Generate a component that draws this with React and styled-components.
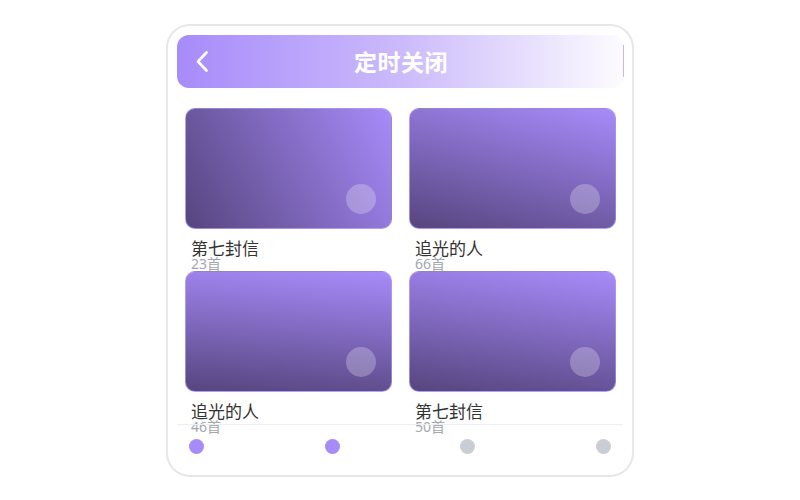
import React from 'react';
import styled, { createGlobalStyle } from 'styled-components';

const GlobalStyle = createGlobalStyle`
  html, body {
    margin: 0;
    padding: 0;
    background: #fff;
  }
  body {
    font-family: "Noto Sans", "Noto Sans CJK SC", sans-serif;
  }
`;

const Page = styled.div`
  display: flex;
  justify-content: center;
  align-items: center;
  height: 500px;
`;

const Phone = styled.div`
  box-sizing: border-box;
  width: 468px;
  height: 453px;
  border: 2px solid #e6e7ea;
  border-radius: 24px;
  padding: 9px;
  display: flex;
  flex-direction: column;
  background: #fff;
`;

const Header = styled.div`
  flex: none;
  height: 53px;
  margin-right: -2px;
  border-radius: 12px;
  background: linear-gradient(to right, #a78bfa 0%, #cbbafb 50%, #fdfcff 100%);
  display: grid;
  grid-template-columns: 1fr auto 1fr;
  align-items: center;
  padding: 0 10px;
  margin-bottom: 20px;
`;

const BackButton = styled.div`
  display: flex;
  align-items: center;
  justify-self: start;
  margin-left: 9px;
`;

const Title = styled.h1`
  margin: 0;
  color: #fff;
  font-size: 23px;
  font-weight: 700;
  letter-spacing: 0.5px;
`;

const EdgeLine = styled.span`
  justify-self: end;
  width: 1px;
  height: 32px;
  margin-right: -9px;
  background: #c4b5fd;
`;

const Grid = styled.div`
  flex: 1 1 0;
  min-height: 0;
  display: grid;
  grid-template-columns: 207px 207px;
  column-gap: 17px;
  align-content: start;
  padding-left: 8px;
`;

const Item = styled.div`
  display: flex;
  flex-direction: column;
`;

const Cover = styled.div`
  position: relative;
  box-sizing: border-box;
  height: 121px;
  border-radius: 10px;
  border: 1px solid rgba(196, 181, 253, 0.55);
  background: linear-gradient(${(p) => p.$angle}, #56457f 0%, #a78bfa 100%);
`;

const Play = styled.span`
  position: absolute;
  right: 15px;
  bottom: 14px;
  width: 30px;
  height: 30px;
  border-radius: 50%;
  background: rgba(255, 255, 255, 0.25);
`;

const Name = styled.div`
  margin: 12px 0 0 6px;
  font-size: 17px;
  line-height: 16px;
  color: #333;
`;

const Count = styled.div`
  margin-left: 6px;
  font-size: 14px;
  line-height: 14px;
  color: #a3a6ad;
`;

const Nav = styled.div`
  flex: none;
  border-top: 1px solid #eceef2;
  padding: 14px 12px 12px;
  display: flex;
  justify-content: space-between;
`;

const Dot = styled.span`
  width: 15px;
  height: 15px;
  border-radius: 50%;
  background: ${(p) => (p.$active ? '#a78bfa' : '#c9cdd4')};
`;

const albums = [
  { name: '第七封信', count: '23首', angle: '60deg' },
  { name: '追光的人', count: '66首', angle: '15deg' },
  { name: '追光的人', count: '46首', angle: '5deg' },
  { name: '第七封信', count: '50首', angle: '8deg' },
];

const App = () => {
  return (
    <Page>
      <GlobalStyle />
      <Phone>
        <Header>
          <BackButton>
            <svg width="13" height="21" viewBox="0 0 13 21">
              <path d="M10.5 1.5 L2 10.5 L10.5 19.5" fill="none" stroke="#fff" strokeWidth="2.6" strokeLinecap="round" strokeLinejoin="round" />
            </svg>
          </BackButton>
          <Title>定时关闭</Title>
          <EdgeLine />
        </Header>
        <Grid>
          {albums.map((a, i) => (
            <Item key={i}>
              <Cover $angle={a.angle}>
                <Play />
              </Cover>
              <Name>{a.name}</Name>
              <Count>{a.count}</Count>
            </Item>
          ))}
        </Grid>
        <Nav>
          <Dot $active />
          <Dot $active />
          <Dot />
          <Dot />
        </Nav>
      </Phone>
    </Page>
  );
};

export default App;
